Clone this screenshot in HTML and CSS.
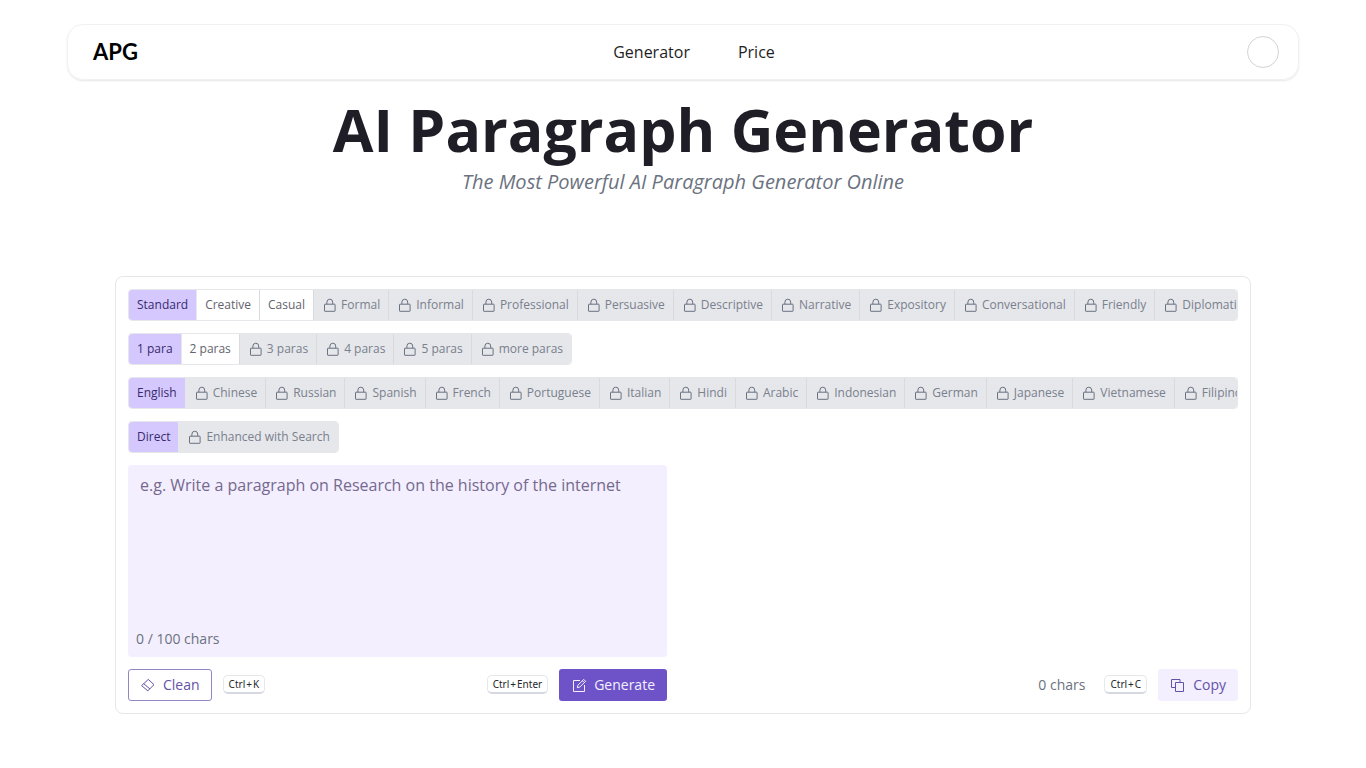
FILE: index.html
```html
<!DOCTYPE html>
<html lang="en">
<head>
<meta charset="utf-8">
<meta name="viewport" content="width=device-width, initial-scale=1">
<title>AI Paragraph Generator</title>
<link rel="stylesheet" href="styles.css">
</head>
<body>
<svg class="sprite" aria-hidden="true">
  <symbol id="lock" viewBox="0 0 16 16"><path d="M2.900 7.200h9.800a.4.4 0 0 1 .4.4v6.300a.4.4 0 0 1-.4.4H2.900a.4.4 0 0 1-.4-.4V7.600a.4.4 0 0 1 .4-.4zM4.900 7.200V5.100a2.900 2.900 0 0 1 5.800 0v2.100" fill="none" stroke="currentColor" stroke-linejoin="round"/></symbol>
</svg>

<header class="navbar">
  <a class="logo" href="#">APG</a>
  <nav class="nav">
    <a href="#">Generator</a>
    <a href="#">Price</a>
  </nav>
  <button class="avatar" type="button" aria-label="Account"></button>
</header>

<main>
  <div class="hero">
    <h1>AI Paragraph Generator</h1>
    <p>The Most Powerful AI Paragraph Generator Online</p>
  </div>

  <form class="card">
    <div class="segments" role="radiogroup" aria-label="Tone">
      <label class="segment"><input type="radio" name="tone" checked>Standard</label>
      <label class="segment"><input type="radio" name="tone">Creative</label>
      <label class="segment"><input type="radio" name="tone">Casual</label>
      <label class="segment locked"><input type="radio" name="tone" disabled><svg><use href="#lock"/></svg>Formal</label>
      <label class="segment locked"><input type="radio" name="tone" disabled><svg><use href="#lock"/></svg>Informal</label>
      <label class="segment locked"><input type="radio" name="tone" disabled><svg><use href="#lock"/></svg>Professional</label>
      <label class="segment locked"><input type="radio" name="tone" disabled><svg><use href="#lock"/></svg>Persuasive</label>
      <label class="segment locked"><input type="radio" name="tone" disabled><svg><use href="#lock"/></svg>Descriptive</label>
      <label class="segment locked"><input type="radio" name="tone" disabled><svg><use href="#lock"/></svg>Narrative</label>
      <label class="segment locked"><input type="radio" name="tone" disabled><svg><use href="#lock"/></svg>Expository</label>
      <label class="segment locked"><input type="radio" name="tone" disabled><svg><use href="#lock"/></svg>Conversational</label>
      <label class="segment locked"><input type="radio" name="tone" disabled><svg><use href="#lock"/></svg>Friendly</label>
      <label class="segment locked"><input type="radio" name="tone" disabled><svg><use href="#lock"/></svg>Diplomatic</label>
    </div>

    <div class="segments" role="radiogroup" aria-label="Length">
      <label class="segment"><input type="radio" name="length" checked>1 para</label>
      <label class="segment"><input type="radio" name="length">2 paras</label>
      <label class="segment locked"><input type="radio" name="length" disabled><svg><use href="#lock"/></svg>3 paras</label>
      <label class="segment locked"><input type="radio" name="length" disabled><svg><use href="#lock"/></svg>4 paras</label>
      <label class="segment locked"><input type="radio" name="length" disabled><svg><use href="#lock"/></svg>5 paras</label>
      <label class="segment locked"><input type="radio" name="length" disabled><svg><use href="#lock"/></svg>more paras</label>
    </div>

    <div class="segments" role="radiogroup" aria-label="Language">
      <label class="segment"><input type="radio" name="language" checked>English</label>
      <label class="segment locked"><input type="radio" name="language" disabled><svg><use href="#lock"/></svg>Chinese</label>
      <label class="segment locked"><input type="radio" name="language" disabled><svg><use href="#lock"/></svg>Russian</label>
      <label class="segment locked"><input type="radio" name="language" disabled><svg><use href="#lock"/></svg>Spanish</label>
      <label class="segment locked"><input type="radio" name="language" disabled><svg><use href="#lock"/></svg>French</label>
      <label class="segment locked"><input type="radio" name="language" disabled><svg><use href="#lock"/></svg>Portuguese</label>
      <label class="segment locked"><input type="radio" name="language" disabled><svg><use href="#lock"/></svg>Italian</label>
      <label class="segment locked"><input type="radio" name="language" disabled><svg><use href="#lock"/></svg>Hindi</label>
      <label class="segment locked"><input type="radio" name="language" disabled><svg><use href="#lock"/></svg>Arabic</label>
      <label class="segment locked"><input type="radio" name="language" disabled><svg><use href="#lock"/></svg>Indonesian</label>
      <label class="segment locked"><input type="radio" name="language" disabled><svg><use href="#lock"/></svg>German</label>
      <label class="segment locked"><input type="radio" name="language" disabled><svg><use href="#lock"/></svg>Japanese</label>
      <label class="segment locked"><input type="radio" name="language" disabled><svg><use href="#lock"/></svg>Vietnamese</label>
      <label class="segment locked"><input type="radio" name="language" disabled><svg><use href="#lock"/></svg>Filipino</label>
    </div>

    <div class="segments" role="radiogroup" aria-label="Mode">
      <label class="segment"><input type="radio" name="mode" checked>Direct</label>
      <label class="segment locked"><input type="radio" name="mode" disabled><svg><use href="#lock"/></svg>Enhanced with Search</label>
    </div>

    <div class="panes">
      <section class="pane">
        <div class="prompt">
          <textarea aria-label="Prompt" placeholder="e.g. Write a paragraph on Research on the history of the internet"></textarea>
          <span class="counter">0 / 100 chars</span>
        </div>
        <div class="actions">
          <button class="btn outline" type="reset">
            <svg viewBox="0 0 16 16"><path d="M8.300 2.400 14 7.700l-6.200 6.100-6.200-5.200zM3.700 6.700l6.200 5.200"/></svg>Clean
          </button>
          <kbd>Ctrl<span>+</span>K</kbd>
          <kbd class="push">Ctrl<span>+</span>Enter</kbd>
          <button class="btn primary" type="button">
            <svg viewBox="0 0 16 16"><path d="M9 3.500H2.500v11h11V8M6.300 10.700l.6-2.500 5.800-5.800 1.900 1.900-5.800 5.800zM11.400 3.700l1.900 1.900"/></svg>Generate
          </button>
        </div>
      </section>
      <section class="pane output">
        <div class="actions">
          <span class="count push">0 chars</span>
          <kbd>Ctrl<span>+</span>C</kbd>
          <button class="btn soft" type="button">
            <svg viewBox="0 0 16 16"><path d="M5.500 5.500h8v9h-8zM5.500 10.500h-4v-8h8.500v3"/></svg>Copy
          </button>
        </div>
      </section>
    </div>
  </form>
</main>
</body>
</html>
```
FILE: styles.css
```css
* {
  box-sizing: border-box;
}

body {
  margin: 0;
  background: #fff;
  color: #1f1e26;
  font-family: "Open Sans", "Noto Sans", sans-serif;
  font-size: 16px;
  line-height: 24px;
}

button,
textarea {
  font: inherit;
}

.sprite {
  display: none;
}

.navbar {
  display: flex;
  justify-content: space-between;
  align-items: center;
  width: calc(100% - 32px);
  max-width: 1232px;
  margin: 24px auto 0;
  padding: 11px 19px 11px 25px;
  border: 1px solid #f1f1f3;
  border-radius: 16px;
  box-shadow: 0 1px 2px rgba(0, 0, 0, 0.1);
}

.logo {
  width: 48px;
  color: #000;
  font-family: Lato, sans-serif;
  font-size: 22px;
  font-weight: 700;
  text-decoration: none;
}

.nav {
  display: flex;
  gap: 48px;
}

.nav a {
  color: inherit;
  text-decoration: none;
}

.avatar {
  width: 32px;
  height: 32px;
  border: 1px solid #d4d4d8;
  border-radius: 50%;
  background: #fff;
}

.hero {
  padding: 17px 16px 80px;
  text-align: center;
}

.hero h1 {
  margin: 0;
  font-size: 59px;
  line-height: 64px;
}

.hero p {
  margin: 7px 0 0;
  color: #6b7280;
  font-size: 20px;
  font-style: italic;
  line-height: 28px;
}

.card {
  display: flex;
  flex-direction: column;
  align-items: flex-start;
  gap: 12px;
  width: calc(100% - 32px);
  max-width: 1136px;
  margin: 0 auto 24px;
  padding: 12px;
  border: 1px solid #e5e7eb;
  border-radius: 8px;
}

.segments {
  display: flex;
  max-width: 100%;
  overflow: hidden;
  border: 1px solid #e5e7eb;
  border-radius: 4px;
}

.segment {
  display: flex;
  flex: none;
  align-items: center;
  gap: 3px;
  height: 30px;
  padding: 0 8px;
  color: #63636d;
  font-size: 12px;
  cursor: pointer;
}

.segment + .segment {
  border-left: 1px solid #d9dade;
}

.segment input {
  position: absolute;
  width: 1px;
  height: 1px;
  margin: 0;
  opacity: 0;
  pointer-events: none;
}

.segment:has(input:checked) {
  background: #d4c8ff;
  color: #392a6c;
}

.segment:has(input:checked) + .segment {
  border-left-color: #e5e7eb;
}

.segment svg {
  width: 16px;
  height: 16px;
  color: #6b7280;
}

.locked {
  background: #e5e7eb;
  color: #7a808c;
  cursor: not-allowed;
}

.panes {
  display: grid;
  grid-template-columns: 1fr 1fr;
  gap: 32px;
  width: 100%;
}

.pane {
  display: flex;
  flex-direction: column;
  gap: 12px;
}

.output {
  justify-content: flex-end;
}

.prompt {
  display: flex;
  flex-direction: column;
  border-radius: 4px;
  background: #f3effe;
}

.prompt textarea {
  height: 164px;
  padding: 8px 12px;
  border: 0;
  outline: 0;
  background: transparent;
  color: #1f1e26;
  resize: none;
}

.prompt textarea::placeholder {
  color: #75698f;
}

.counter {
  padding: 0 8px 8px;
  font-size: 14px;
  line-height: 20px;
  color: #6b7280;
}

.actions {
  display: flex;
  align-items: center;
  gap: 11px;
}

.push {
  margin-left: auto;
}

.count {
  margin-right: 8px;
  color: #6b7280;
  font-size: 14px;
}

kbd {
  display: flex;
  gap: 1px;
  margin-bottom: 2px;
  padding: 0 5px;
  border: 1px solid #e5e7eb;
  border-bottom: 2px solid #d6d9e0;
  border-radius: 5px;
  color: #27272a;
  font-family: "Noto Sans", sans-serif;
  font-size: 10px;
  line-height: 16px;
}

.btn {
  display: flex;
  align-items: center;
  gap: 7px;
  height: 32px;
  padding: 0 11px;
  border: 1px solid transparent;
  border-radius: 3px;
  font-size: 14px;
  cursor: pointer;
}

.btn svg {
  width: 16px;
  height: 16px;
  fill: none;
  stroke: currentColor;
  stroke-linejoin: round;
}

.outline {
  border-color: #9386c4;
  background: #fff;
  color: #6552a8;
}

.primary {
  background: #6e53c8;
  color: #f3f0fe;
}

.soft {
  background: #f3effe;
  color: #6552a8;
}
```
